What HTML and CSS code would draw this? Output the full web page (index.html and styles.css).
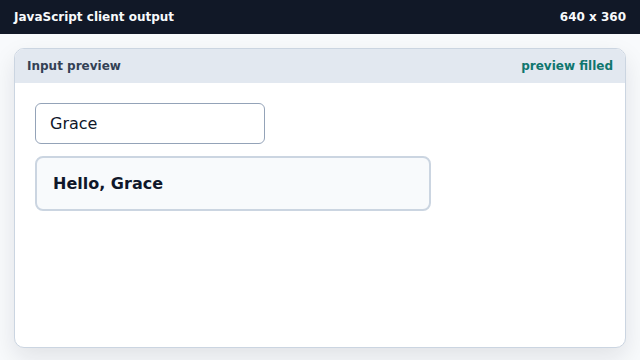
FILE: index.html
```html
<!DOCTYPE html>
<html lang="en">
<head>
    <meta charset="UTF-8">
    <title>JavaScript client output</title>
    <link rel="stylesheet" href="styles.css">
</head>
<body>
    <div class="topbar">
        <span>JavaScript client output</span>
        <span>640 x 360</span>
    </div>

    <div class="main">
        <div class="card">
            <div class="card-head">
                <span>Input preview</span>
                <span class="status">preview filled</span>
            </div>
            <div class="card-body">
                <input class="name-input" id="name" type="text" value="Grace">
                <div class="greeting" id="greeting">Hello, Grace</div>
            </div>
        </div>
    </div>

    <script>
        // 输入时更新问候语
        const input = document.getElementById('name');
        input.addEventListener('input', function() {
            document.getElementById('greeting').textContent = 'Hello, ' + input.value;
        });
    </script>
</body>
</html>
```

FILE: styles.css
```css
body {
    margin: 0;
    height: 100vh;
    background: #f8fafc;
    font-family: 'DejaVu Sans', sans-serif;
    color: #0f172a;
    display: flex;
    flex-direction: column;
    overflow: hidden;
}

.topbar {
    height: 34px;
    flex: none;
    background: #111827;
    color: #f8fafc;
    font-size: 12px;
    font-weight: bold;
    padding: 0 14px;
    display: flex;
    align-items: center;
    justify-content: space-between;
}

.main {
    flex: 1;
    padding: 14px 14px 12px;
    display: flex;
    min-height: 0;
}

.card {
    flex: 1;
    background: #fff;
    border: 1px solid #cbd5e1;
    border-radius: 10px;
    box-shadow: 0 10px 24px rgba(15, 23, 42, 0.1);
    overflow: hidden;
    display: flex;
    flex-direction: column;
}

.card-head {
    height: 34px;
    flex: none;
    background: #e2e8f0;
    color: #334155;
    font-size: 12px;
    font-weight: bold;
    padding: 0 12px;
    display: flex;
    align-items: center;
    justify-content: space-between;
}

.status {
    color: #0f766e;
}

.card-body {
    padding: 20px;
    display: flex;
    flex-direction: column;
    align-items: flex-start;
    gap: 12px;
}

.name-input {
    width: 230px;
    height: 41px;
    box-sizing: border-box;
    border: 1px solid #94a3b8;
    border-radius: 6px;
    padding: 0 14px;
    font-family: 'DejaVu Sans', sans-serif;
    font-size: 16px;
    color: #0f172a;
    outline: none;
}

.greeting {
    width: 396px;
    height: 55px;
    box-sizing: border-box;
    background: #f8fafc;
    border: 2px solid #cbd5e1;
    border-radius: 8px;
    padding: 0 16px;
    font-size: 16px;
    font-weight: bold;
    display: flex;
    align-items: center;
}
```
